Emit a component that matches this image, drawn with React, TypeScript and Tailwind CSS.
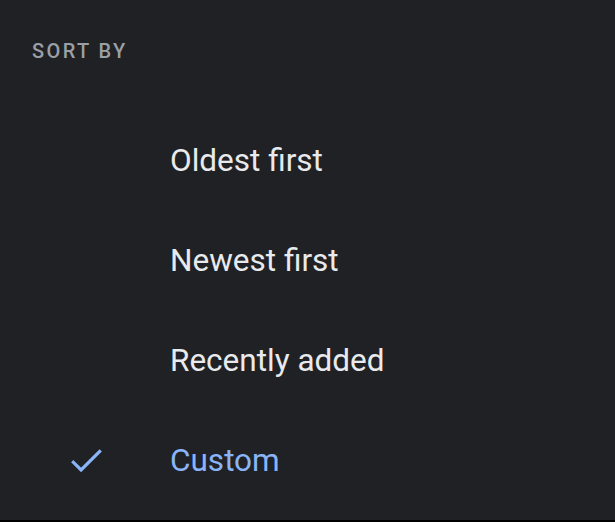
const options = ["Oldest first", "Newest first", "Recently added", "Custom"];

export default function App() {
    const selected = "Custom";

    return (
        <div className="w-[615px] h-[522px] bg-black flex flex-col" style={{ fontFamily: "Roboto, 'Noto Sans', sans-serif" }}>
            <div className="h-[520px] bg-[#202124] flex flex-col">
                <div className="h-[100px] flex items-center pl-8 pt-[1px]">
                    <p className="text-[20px] font-medium tracking-[0.12em] text-[#9aa0a6]">SORT BY</p>
                </div>
                <ul className="pt-[11px]">
                    {options.map((option) => {
                        const active = option === selected;
                        return (
                            <li key={option} className="h-[100px] flex items-center">
                                <div className="w-[170px] pl-[68px] flex items-center">
                                    {active && (
                                        <svg width="37" height="37" viewBox="0 0 24 24" fill="none">
                                            <path d="M3.5 12.5l5 5L20.5 5.5" stroke="#8ab4f8" strokeWidth="2.1" strokeLinecap="square" />
                                        </svg>
                                    )}
                                </div>
                                <span className={active ? "text-[31.5px] text-[#8ab4f8]" : "text-[31.5px] text-[#e8eaed]"}>
                                    {option}
                                </span>
                            </li>
                        );
                    })}
                </ul>
            </div>
        </div>
    );
}
